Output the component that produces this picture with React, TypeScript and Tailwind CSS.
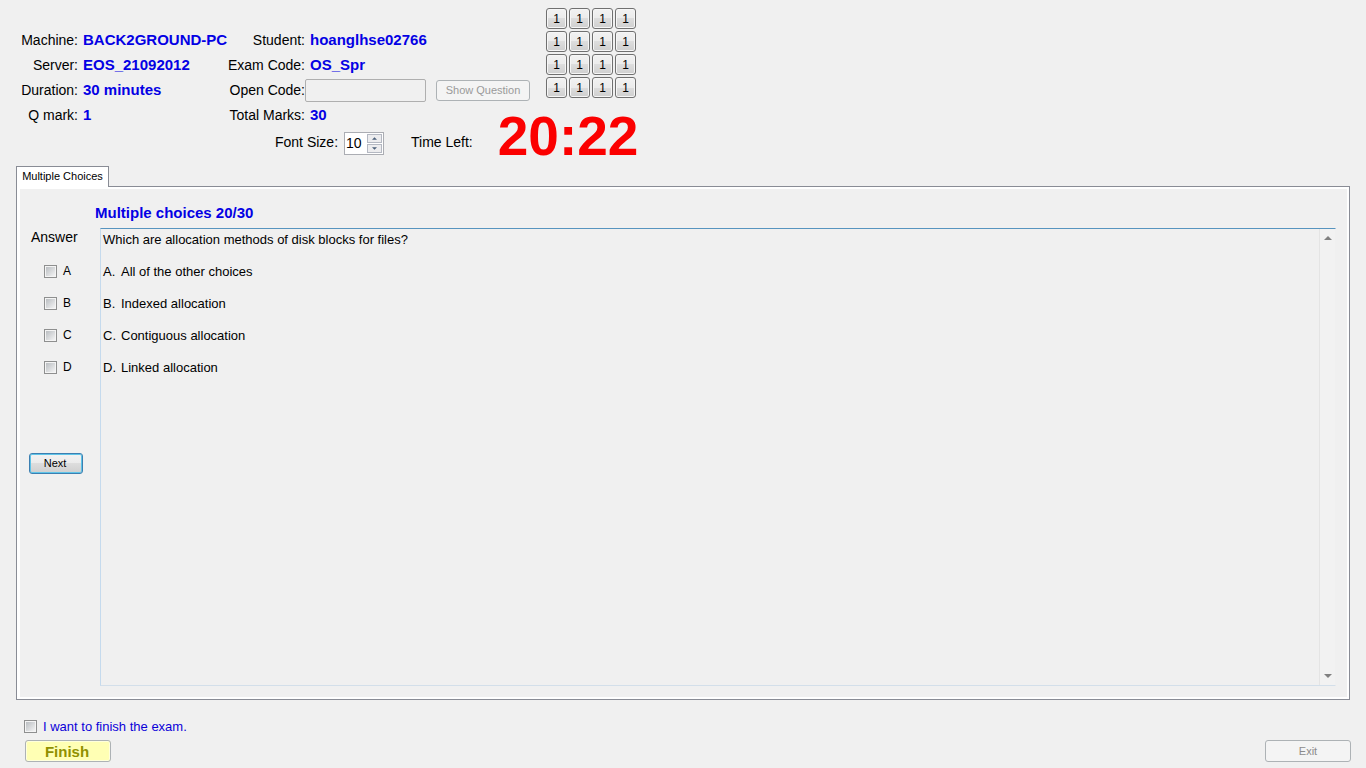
import { useState } from "react";
import type { ReactNode } from "react";

const KEYPAD = Array.from({ length: 16 }, (_, i) => i);

const CHOICES = [
  { key: "A", text: "All of the other choices" },
  { key: "B", text: "Indexed allocation" },
  { key: "C", text: "Contiguous allocation" },
  { key: "D", text: "Linked allocation" },
];

const checkboxClass =
  "size-[13px] shrink-0 appearance-none border border-[#8e8f8f] bg-linear-to-br from-[#b4b8bc] to-[#fafafa] outline-1 -outline-offset-2 outline-[#f4f4f4] checked:bg-none checked:bg-[#3c7fb1]";

const rowClass = "grid h-[25px] grid-cols-[62px_149px_78px_auto] items-center";

function Label({ children }: { children: ReactNode }) {
  return <span className="text-right whitespace-nowrap">{children}</span>;
}

function Value({ children }: { children: ReactNode }) {
  return <span className="pl-[5px] text-[15px] font-bold whitespace-nowrap text-[#0400e4]">{children}</span>;
}

function Arrow({ up = false, className = "" }: { up?: boolean; className?: string }) {
  return (
    <svg viewBox="0 0 8 4" className={className} aria-hidden="true">
      <path d={up ? "M0 4L4 0L8 4Z" : "M0 0H8L4 4Z"} fill="currentColor" />
    </svg>
  );
}

export default function App() {
  const [fontSize, setFontSize] = useState(10);
  const [finish, setFinish] = useState(false);

  return (
    <div className="flex min-h-screen flex-col bg-[#f0f0f0] px-4 font-['Liberation_Sans',Arial,sans-serif] text-[14px] text-black">
      <header className="flex h-[166px] shrink-0 flex-col pt-2">
        <div className="flex h-[95px] items-start gap-4">
          <div className="pt-5">
            <div className={rowClass}>
              <Label>Machine:</Label>
              <Value>BACK2GROUND-PC</Value>
              <Label>Student:</Label>
              <Value>hoanglhse02766</Value>
            </div>
            <div className={rowClass}>
              <Label>Server:</Label>
              <Value>EOS_21092012</Value>
              <Label>Exam Code:</Label>
              <Value>OS_Spr</Value>
            </div>
            <div className={rowClass}>
              <Label>Duration:</Label>
              <Value>30 minutes</Value>
              <label htmlFor="open-code" className="text-right whitespace-nowrap">
                Open Code:
              </label>
              <div className="flex items-center gap-[10px]">
                <input
                  id="open-code"
                  type="text"
                  disabled
                  className="h-[23px] w-[121px] rounded-xs border border-[#afafaf] bg-[#f0f0f0] px-1"
                />
                <button
                  type="button"
                  disabled
                  className="h-[21px] w-[94px] rounded-[3px] border border-[#adb2b5] bg-[#f4f4f4] text-[11px] whitespace-nowrap text-[#9a9a9a]"
                >
                  Show Question
                </button>
              </div>
            </div>
          </div>
          <div className="grid grid-cols-4 gap-0.5">
            {KEYPAD.map((i) => (
              <button
                key={i}
                type="button"
                className="size-[21px] rounded-[3px] border border-[#707070] bg-[linear-gradient(#f2f2f2,#ebebeb_50%,#dddddd_50%,#cfcfcf)] text-[12px] leading-none shadow-[inset_0_0_0_1px_#f6f6f6]"
              >
                1
              </button>
            ))}
          </div>
        </div>
        <div className="flex items-start">
          <div>
            <div className={rowClass}>
              <Label>Q mark:</Label>
              <Value>1</Value>
              <Label>Total Marks:</Label>
              <Value>30</Value>
            </div>
            <div className="flex h-[29px] items-center pl-[259px]">
              <label htmlFor="font-size" className="whitespace-nowrap">
                Font Size:
              </label>
              <div className="mt-0.5 ml-1.5 flex h-[23px] w-10 border border-[#abadb3] bg-white p-px">
                <input
                  id="font-size"
                  type="text"
                  inputMode="numeric"
                  value={fontSize}
                  onChange={(e) => setFontSize(Number(e.target.value) || 0)}
                  className="w-[21px] min-w-0 bg-transparent text-[14px] outline-none"
                />
                <div className="flex w-[15px] flex-col gap-px">
                  <button
                    type="button"
                    aria-label="Increase font size"
                    onClick={() => setFontSize(fontSize + 1)}
                    className="flex flex-1 items-center justify-center border border-[#b4b8c2] bg-[#ececee] text-[#4c607a]"
                  >
                    <Arrow up className="h-[3px] w-[5px]" />
                  </button>
                  <button
                    type="button"
                    aria-label="Decrease font size"
                    onClick={() => setFontSize(fontSize - 1)}
                    className="flex flex-1 items-center justify-center border border-[#b4b8c2] bg-[#ececee] text-[#4c607a]"
                  >
                    <Arrow className="h-[3px] w-[5px]" />
                  </button>
                </div>
              </div>
              <span className="ml-[27px] whitespace-nowrap">Time Left:</span>
            </div>
          </div>
          <div className="ml-[25px] pt-[5px] text-[55px] leading-[56px] font-bold text-[#fb0000]">20:22</div>
        </div>
      </header>

      <main className="flex flex-1 flex-col">
        <div role="tablist" className="z-10 -mb-px flex">
          <button
            type="button"
            role="tab"
            aria-selected="true"
            className="h-[21px] w-[93px] border border-b-0 border-[#898c95] bg-white pb-0.5 text-[11px] whitespace-nowrap"
          >
            Multiple Choices
          </button>
        </div>
        <section className="flex flex-1 flex-col border border-[#898c95] bg-white pt-0.5 pr-0.5 pb-0.5 pl-[3px]">
          <div className="flex flex-1 flex-col bg-[#f0f0f0] pr-[11px] pb-[11px]">
            <h1 className="h-[39px] pt-[15px] pl-[75px] text-[15px] leading-[18px] font-bold text-[#0400e4]">
              Multiple choices 20/30
            </h1>
            <div className="flex flex-1">
              <div className="flex w-20 shrink-0 flex-col">
                <div className="h-[27px] pl-[11px] leading-[18px]">Answer</div>
                {CHOICES.map((c) => (
                  <label key={c.key} className="flex h-8 items-center gap-1.5 pl-6 text-[12px]">
                    <input type="checkbox" className={checkboxClass} />
                    {c.key}
                  </label>
                ))}
                <button
                  type="button"
                  className="mt-[70px] ml-[9px] h-[21px] w-[54px] rounded-[3px] border border-[#3c7fb1] bg-[linear-gradient(#f2f2f2,#ebebeb_50%,#dddddd_50%,#cfcfcf)] pr-0.5 text-[11px] shadow-[inset_0_0_0_1px_#5fc4e8]"
                >
                  Next
                </button>
              </div>
              <div className="flex flex-1 border border-t-[#5794bf] border-r-transparent border-b-[#d3dfea] border-l-[#c5daed]">
                <div className="flex-1 pt-[3px] pl-0.5 text-[13px] leading-4">
                  <p>Which are allocation methods of disk blocks for files?</p>
                  {CHOICES.map((c) => (
                    <p key={c.key} className="mt-4 flex">
                      <span className="w-[18px]">{c.key}.</span>
                      <span>{c.text}</span>
                    </p>
                  ))}
                </div>
                <div className="flex w-4 flex-col items-center justify-between border-l border-[#e4e4e4] bg-[#f2f2f2] py-[7px] text-[#808080]">
                  <Arrow up className="h-1 w-2" />
                  <Arrow className="h-1 w-2" />
                </div>
              </div>
            </div>
          </div>
        </section>
      </main>

      <footer className="-mr-px flex h-[68px] shrink-0 items-end justify-between pb-1.5">
        <div className="pl-2">
          <label className="flex h-[26px] items-center gap-1.5 pb-px text-[13px] text-[#0b00d8]">
            <input
              type="checkbox"
              checked={finish}
              onChange={(e) => setFinish(e.target.checked)}
              className={checkboxClass}
            />
            I want to finish the exam.
          </label>
          <button
            type="button"
            disabled={!finish}
            className="ml-px flex h-[22px] w-[86px] items-center justify-center rounded-[3px] border border-[#adb2b5] bg-[#ffffb4] pt-0.5 pr-0.5 text-[15px] font-bold text-[#909000] shadow-[inset_0_0_0_1px_#ffffdc]"
          >
            Finish
          </button>
        </div>
        <button
          type="button"
          disabled
          className="h-[22px] w-[86px] rounded-[3px] border border-[#adb2b5] bg-[#f4f4f4] text-[11px] text-[#8c8c8c]"
        >
          Exit
        </button>
      </footer>
    </div>
  );
}
